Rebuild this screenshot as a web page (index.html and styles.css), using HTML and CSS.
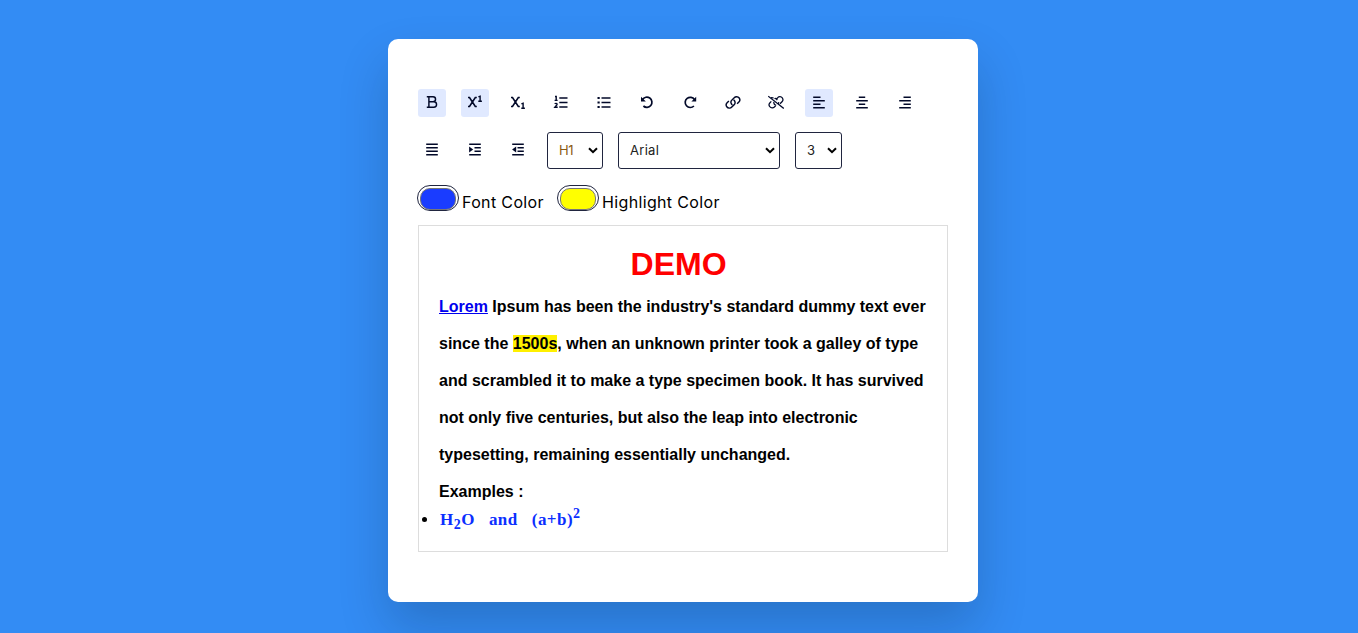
FILE: index.html
```html
<!DOCTYPE html>
<html lang="en">
<head>
<meta charset="utf-8">
<title>Rich Text Editor</title>
<link rel="stylesheet" href="styles.css">
</head>
<body>
<div class="container">
  <div class="options">
    <button class="option active"><svg viewBox="0 0 16 16"><path class="thin" d="M2.8 2.7H9a2.55 2.55 0 0 1 0 5.1H4.9M9 7.8h.8a2.75 2.75 0 0 1 0 5.5h-7M4.9 2.7v10.6"/></svg></button>
    <button class="option active"><svg viewBox="0 0 16 16"><path d="M1 3.5h1.5l5.8 9h1.5M9.8 3.5H8.3l-5.8 9H1"/><path class="tiny" d="M11.4 2.9l1.7-.7v5.1M11.3 7.3h3.6"/></svg></button>
    <button class="option"><svg viewBox="0 0 16 16"><path d="M1 3.5h1.5l5.8 9h1.5M9.8 3.5H8.3l-5.8 9H1"/><path class="tiny" d="M11.4 9.9l1.7-.7v5.1M11.3 14.3h3.6"/></svg></button>
    <button class="option"><svg viewBox="0 0 16 16"><path d="M6.3 4h8.2M6.3 8.5h8.2M6.3 13h8.2"/><path class="tiny" d="M2 2.5h1.2v3.7M1.6 6.4h3M1.7 9.9c.8-.9 2.5-.7 2.4.4 0 .9-1.4 1.8-2.3 3h2.9"/></svg></button>
    <button class="option"><svg viewBox="0 0 16 16"><path d="M5.5 4h9M5.5 8.5h9M5.5 13h9"/><path class="dots" d="M1.5 4h2.2M1.5 8.5h2.2M1.5 13h2.2"/></svg></button>
    <button class="option"><svg viewBox="0 0 16 16"><path class="arc" d="M3.5 5.5A5.1 5.1 0 1 1 4.4 12"/><path class="fill" d="M2 2.7v4.8h4.8z"/></svg></button>
    <button class="option"><svg viewBox="0 0 16 16"><path class="arc" d="M12.5 5.5A5.1 5.1 0 1 0 11.9 12"/><path class="fill" d="M14.2 2.7v4.8H9.4z"/></svg></button>
    <button class="option"><svg viewBox="0 0 16 16"><path class="thin" d="M7.4 10.9A3.1 3.1 0 0 1 6.4 6.6l2.8-2.8a3.2 3.2 0 0 1 5 .2c.9 1.3.8 2.9-.3 4l-1.8 1.8M8.6 5.9a3.1 3.1 0 0 1 1 4.3L6.8 13a3.2 3.2 0 0 1-5-.2c-.9-1.3-.8-2.9.3-4L3.9 7"/></svg></button>
    <button class="option"><svg viewBox="0 0 16 16"><g class="slashed"><path d="M.2 2.2l15.6 12.2"/><path d="M5.5 4.1c-.8-.5-1.8-.7-2.6-.3M6.5 4.8c1-.7 2-.1 2.8 1.3M8.2 5.2l1.5-1.5a3 3 0 0 1 4.6.2c.9 1.3.7 2.9-.3 3.9l-2 2M10.6 8.1c.1.8 0 1.4-.4 2M3.3 7.4L2 8.7a3 3 0 0 0-.2 4c1.2 1.4 3.3 1.5 4.6.3l1.2-1.2M5.8 7.9c-.1 1.7.8 3 2.4 3.4"/></g></svg></button>
    <button class="option active"><svg viewBox="0 0 16 16"><path d="M2.2 3.3h7.3M2.2 6.8h11.6M2.2 10.2h7.3M2.2 13.7h11.6"/></svg></button>
    <button class="option"><svg viewBox="0 0 16 16"><path d="M4.8 3.3h6.4M2.2 6.8h11.6M4.8 10.2h6.4M2.2 13.7h11.6"/></svg></button>
    <button class="option"><svg viewBox="0 0 16 16"><path d="M6.5 3.3h7.3M2.2 6.8h11.6M6.5 10.2h7.3M2.2 13.7h11.6"/></svg></button>
    <button class="option low"><svg viewBox="0 0 16 16"><path d="M2.2 3.3h11.6M2.2 6.8h11.6M2.2 10.2h11.6M2.2 13.7h11.6"/></svg></button>
    <button class="option low"><svg viewBox="0 0 16 16"><path d="M2.2 3.3h11.6M7.5 6.8h6.3M7.5 10.2h6.3M2.2 13.7h11.6"/><path class="fill" d="M2.1 5.5v6L6.2 8.5z"/></svg></button>
    <button class="option low"><svg viewBox="0 0 16 16"><path d="M2.2 3.3h11.6M7.5 6.8h6.3M7.5 10.2h6.3M2.2 13.7h11.6"/><path class="fill" d="M6.2 5.5v6L2.1 8.5z"/></svg></button>
    <div class="select heading">H1<svg class="chevron" viewBox="0 0 10 7"><path d="M1 1.2l4 4 4-4"/></svg></div>
    <div class="select family">Arial<svg class="chevron" viewBox="0 0 10 7"><path d="M1 1.2l4 4 4-4"/></svg></div>
    <div class="select size">3<svg class="chevron" viewBox="0 0 10 7"><path d="M1 1.2l4 4 4-4"/></svg></div>
    <div class="color"><span class="well blue"></span><span class="label font-label">Font Color</span></div>
    <div class="color"><span class="well yellow"></span><span class="label highlight-label">Highlight Color</span></div>
  </div>
  <div class="editor">
    <h1>DEMO&nbsp;</h1>
    <p><a href="#">Lorem</a> Ipsum has been the industry's standard dummy text ever<br>since the <mark>1500s</mark>, when an unknown printer took a galley of type<br>and scrambled it to make a type specimen book. It has survived<br>not only five centuries, but also the leap into electronic<br>typesetting, remaining essentially unchanged.<br>Examples :</p>
    <ul><li>H<sub>2</sub>O &nbsp; and &nbsp; (a+b)<sup>2</sup></li></ul>
  </div>
</div>
</body>
</html>
```
FILE: styles.css
```css
* { box-sizing: border-box; margin: 0; padding: 0; }
body {
  height: 633px;
  padding: 39px 0 0 388px;
  overflow: hidden;
  background: #338cf4;
  font-family: Inter, "Liberation Sans", sans-serif;
}
.container {
  width: 590px;
  height: 563px;
  padding: 50px 30px;
  background: #fff;
  border-radius: 10px;
  box-shadow: 0 25px 50px rgba(7, 20, 35, 0.2);
}
.options {
  display: flex;
  flex-wrap: wrap;
  align-items: center;
  gap: 15px;
}
.option {
  display: grid;
  justify-items: center;
  width: 28px;
  height: 28px;
  padding-top: 5px;
  background: #fff;
  border: 0;
  border-radius: 3px;
}
.option.active { background: #e0e9ff; }
.option.low { padding-top: 4px; }
svg { display: block; fill: none; stroke: #020929; }
.option svg { width: 16px; height: 16px; stroke-width: 1.6; }
.option .thin { stroke-width: 1.45; }
.option .tiny { stroke-width: 1.4; }
.option .slashed { stroke-width: 1.25; }
.option .dots { stroke-width: 2.2; }
.option .arc { stroke-width: 1.7; }
.option .fill { fill: #020929; stroke: none; }
.select {
  display: flex;
  align-items: center;
  justify-content: space-between;
  height: 37px;
  padding: 0 4px 1px 11px;
  border: 1px solid #20253f;
  border-radius: 3px;
  color: #222;
  font-size: 13px;
  letter-spacing: 0.3px;
}
.heading { width: 56px; color: #8a5a13; letter-spacing: -0.3px; }
.family { width: 162px; }
.size { width: 47px; }
.chevron { width: 10px; height: 7px; stroke: #000; stroke-width: 2; }
.color {
  display: flex;
  gap: 3px;
  height: 26px;
  margin: 1px 0 0 -1px;
}
.well {
  width: 42px;
  height: 26px;
  padding: 2px;
  border: 1px solid #20253f;
  border-radius: 13px;
}
.well::before {
  content: "";
  display: block;
  height: 20px;
  border: 1px solid #777;
  border-radius: 10px;
}
.blue::before { background: #1a3cff; }
.yellow::before { background: #ff0; }
.label {
  font-size: 16px;
  line-height: 34px;
  letter-spacing: 0.35px;
  white-space: nowrap;
}
.font-label { width: 81px; }
.editor {
  height: 327px;
  margin-top: 14px;
  padding: 14px 20px;
  border: 1px solid #ddd;
  font: bold 16px "Liberation Sans", Arial, sans-serif;
}
h1 { font-size: 32px; line-height: 48px; text-align: center; color: #f00; }
p { line-height: 37px; white-space: nowrap; }
a { color: #00e; }
mark { background: #fff000; }
li {
  padding-left: 1px;
  color: #0b2fff;
  font: bold 17px/20px "Liberation Serif", serif;
  letter-spacing: 0.45px;
  white-space: nowrap;
}
li::marker { color: #000; }
sub, sup { font-size: 14px; line-height: 0; }
```
